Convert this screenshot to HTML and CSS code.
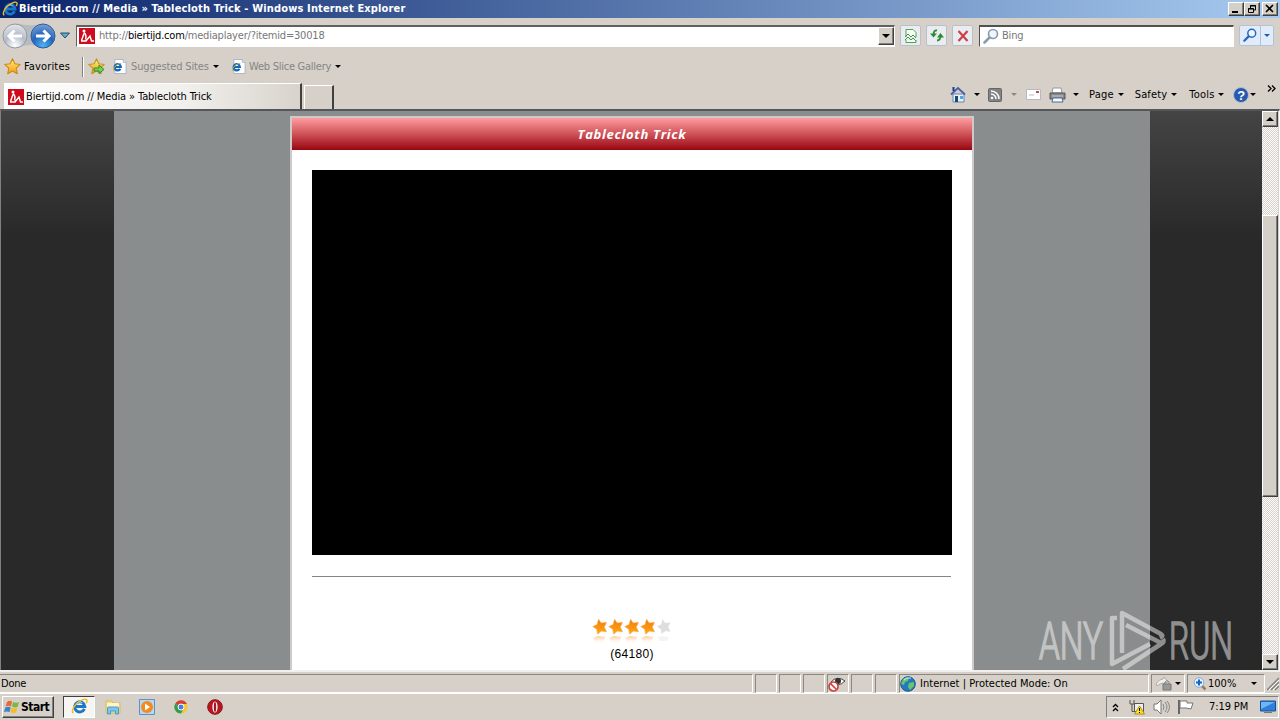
FILE: index.html
```html
<!DOCTYPE html>
<html lang="en">
<head>
    <meta charset="UTF-8" />
    <title>Biertijd.com // Media » Tablecloth Trick</title>
    <link rel="stylesheet" href="styles.css">
</head>
<body>
    <svg class="defs" width="0" height="0">
        <defs>
            <linearGradient id="gold" x1="0" y1="0" x2="0" y2="1"><stop offset="0" stop-color="#fff27a" /><stop offset="1" stop-color="#f59a13" /></linearGradient>
            <linearGradient id="orange" x1="0" y1="0" x2="0" y2="1"><stop offset="0" stop-color="#f47a14" /><stop offset="1" stop-color="#ffa90c" /></linearGradient>
            <radialGradient id="blue" cx=".5" cy=".9" r=".9"><stop offset="0" stop-color="#4fb4f4" /><stop offset=".5" stop-color="#2465bd" /><stop offset="1" stop-color="#7aa2d4" /></radialGradient>
            <radialGradient id="silver" cx=".5" cy=".9" r=".9"><stop offset="0" stop-color="#ffffff" /><stop offset=".5" stop-color="#b4bcc8" /><stop offset="1" stop-color="#e6e8ec" /></radialGradient>
            <linearGradient id="fade" x1="0" y1="0" x2="0" y2="1"><stop offset="0" stop-color="#ffbd70" stop-opacity=".8" /><stop offset="1" stop-color="#fff" stop-opacity="0" /></linearGradient>
            <symbol id="ie" viewBox="0 0 16 16">
                <path d="M12.6 10.3A4.8 4.8 0 1 1 13 8H4" fill="none" stroke="#1b78c8" stroke-width="2.8" />
                <path d="M4.6 6.2a3.9 3.9 0 0 1 6-1.5" fill="none" stroke="#8bd3fa" stroke-width="1" />
                <path d="M2.3 14.3C-1 12 5 3.300 12 1.300c4-.9 3.400 2 2.200 3.700" fill="none" stroke="#edbc2e" stroke-width="1.400" />
            </symbol>
            <symbol id="iepage" viewBox="0 0 16 16">
                <path d="M3 .5h9l3 3v12H3z" fill="#fff" stroke="#a4b4c8" />
                <path d="M12 .5v3h3" fill="#dde6f0" stroke="#a4b4c8" />
                <path d="M9 10.500A3.400 3.400 0 1 1 9.500 8.500H3" fill="none" stroke="#1467b8" stroke-width="2.200" />
                <path d="M2 13C0 10 5 5 10 4.500" fill="none" stroke="#d9b33b" />
            </symbol>
            <symbol id="fav" viewBox="0 0 16 16">
                <path d="M0 0h16v16H0z" fill="#cf0a1c" />
                <circle cx="5" cy="3" r="1.500" fill="#fff" />
                <path d="M5 4.500Q8 7 6.500 11.500M5 5.500L2.500 12.500M2 13h5l4-5 1.500 5H15" fill="none" stroke="#fff" stroke-width="1.500" />
            </symbol>
            <symbol id="star" viewBox="0 0 16 16">
                <path d="M8 .8l2.200 4.700 5.100.6-3.800 3.500 1 5.200L8 12.300l-4.500 2.500 1-5.200L.7 6.100l5.100-.6z" stroke-linejoin="round" />
            </symbol>
            <symbol id="rate" viewBox="0 0 16 16">
                <path d="M6.500 .8l2.700 3.700 5.300-.6-2.300 4.600 2.300 4.800-5.100-.7-3.800 3-.8-4.900L.8 8.100l4.400-2z" stroke-linejoin="round" />
            </symbol>
            <symbol id="lens" viewBox="0 0 16 16">
                <path d="M7 9L1.500 14.500" stroke-width="2.500" stroke-linecap="round" />
                <circle cx="10" cy="6" r="4.500" fill="#eef6ff" stroke-width="1.700" />
            </symbol>
        </defs>
    </svg>

    <div class="titlebar">
        <svg class="title-icon" width="16" height="16"><use href="#ie" /></svg>
        <span class="title-text">Biertijd.com // Media » Tablecloth Trick - Windows Internet Explorer</span>
        <div class="win-buttons">
            <span class="win-btn"><svg width="12" height="10"><path d="M2 8h6" stroke="#000" stroke-width="2" /></svg></span>
            <span class="win-btn"><svg width="12" height="10"><path d="M4.500 4V1.500h5V6H8M4 2h6" fill="none" stroke="#000" /><path d="M2.500 4.500h5v4h-5zM2 5h6" fill="none" stroke="#000" /></svg></span>
            <span class="win-btn close"><svg width="12" height="10"><path d="M2 1l7 7M9 1L2 8" stroke="#000" stroke-width="1.600" /></svg></span>
        </div>
    </div>

    <div class="navbar">
        <svg class="arrows" width="56" height="28">
            <path d="M15 1.500Q28 5 43 1.500V26Q28 20 15 26z" fill="#b8bbc0" />
            <circle cx="13" cy="14" r="12" fill="url(#silver)" stroke="#8f98a5" />
            <path d="M7 14h13M12.500 8.500L7 14l5.500 5.500" fill="none" stroke="#fff" stroke-width="3" />
            <circle cx="41" cy="14" r="12" fill="url(#blue)" stroke="#315c98" />
            <path d="M34 14h12M41.500 8.500L47 14l-5.500 5.500" fill="none" stroke="#fff" stroke-width="3" />
        </svg>
        <svg class="recent" width="10" height="7"><path d="M.5 1h9L5 6z" fill="#62aac8" stroke="#1c5274" /></svg>
        <div class="address">
            <svg width="16" height="16"><use href="#fav" /></svg>
            <span class="url">http://<b>biertijd.com</b>/mediaplayer/?itemid=30018</span>
            <span class="drop"><i class="tri wide"></i></span>
        </div>
        <div class="tool"><svg width="16" height="16"><path d="M3 9V1.500h7l3 3V9M3 12v2.500h10V12" fill="#f4fff2" stroke="#55a058" /><path d="M2 9l3-3 3 3 2-2 3 3M2 12l3-3 3 3 2-2 3 3" fill="none" stroke="#45964c" /></svg></div>
        <div class="tool"><svg width="16" height="16"><path d="M8 2.500Q4.500 2 4.500 7M8 12.500q3.500 0 3.500-5" fill="none" stroke="#2a8b31" stroke-width="1.800" /><path d="M1 5.500h7L4.500 9.500zM8 9.500h7L11.500 5z" fill="#2a8b31" /></svg></div>
        <div class="tool"><svg width="16" height="16"><path d="M3.500 3l9 10M12.500 3l-9 10" stroke="#cd4146" stroke-width="2.200" /></svg></div>
        <div class="search">
            <svg width="16" height="16" stroke="#8b9cb1"><use href="#lens" /></svg>
            <span>Bing</span>
        </div>
        <div class="go">
            <span class="go-main"><svg width="14" height="14" stroke="#2563c4"><use href="#lens" /></svg></span>
            <span class="go-drop"><i class="tri blue"></i></span>
        </div>
    </div>

    <div class="favorites">
        <svg class="fav-star" width="17" height="17" fill="url(#gold)" stroke="#cf8717"><use href="#star" /></svg>
        <span class="fav-label">Favorites</span>
        <i class="sep"></i>
        <svg width="17" height="17"><use href="#star" fill="url(#gold)" stroke="#c69222" /><path d="M6 10h5V7l5 4.500-5 4V13H6z" fill="#70d34f" stroke="#308d2c" /></svg>
        <svg class="page-icon" width="15" height="15"><use href="#iepage" /></svg>
        <span class="gray suggested">Suggested Sites</span><i class="tri"></i>
        <svg class="page-icon second" width="15" height="15"><use href="#iepage" /></svg>
        <span class="gray slice">Web Slice Gallery</span><i class="tri"></i>
    </div>

    <div class="tabs">
        <div class="tab">
            <svg width="16" height="16"><use href="#fav" /></svg>
            <span>Biertijd.com // Media » Tablecloth Trick</span>
        </div>
        <div class="newtab"></div>
        <div class="commands">
            <svg width="17" height="17"><path d="M3 8h11v8H3z" fill="#e9f0fb" stroke="#6e83a8" /><path d="M1 8.500L8 2l7 6.500" fill="none" stroke="#4263ac" stroke-width="1.800" /><path d="M3.500 1v4" stroke="#26377c" stroke-width="2" /><path d="M5 10h3v6H5z" fill="#184977" /><path d="M10 10h3v3h-3z" fill="#4caae2" /></svg>
            <i class="tri c1"></i>
            <svg class="c2" width="14" height="14"><rect x=".5" y=".5" width="13" height="13" rx="1" fill="#828282" stroke="#666" /><circle cx="4" cy="10" r="1.300" fill="#fff" /><path d="M3 6a5 5 0 0 1 5 5M3 3a8 8 0 0 1 8 8" fill="none" stroke="#fff" stroke-width="1.500" /></svg>
            <i class="tri c3"></i>
            <svg class="c4" width="15" height="11"><path d="M.5.5h14v10H.5z" fill="#fff" stroke="#b8b8c4" /><path d="M10 2h3v2h-3z" fill="#c74755" /><path d="M3 6h5" stroke="#bbb" /></svg>
            <svg class="c5" width="17" height="16"><path d="M4 1h8l1 5H3z" fill="#fff" stroke="#999" /><path d="M1 6h15v6H1z" fill="#858990" stroke="#555" /><path d="M3 9h11" stroke="#ccc" /><path d="M4 11h9l1 4H3z" fill="#f6faff" stroke="#4c6e92" /></svg>
            <i class="tri c6"></i>
            <span class="c7">Page</span><i class="tri"></i>
            <span class="c8">Safety</span><i class="tri"></i>
            <span class="c9">Tools</span><i class="tri"></i>
            <svg class="c10" width="16" height="16"><circle cx="8" cy="8" r="7.500" fill="#2859af" stroke="#aebfd9" /><text x="8" y="13" text-anchor="middle" class="help">?</text></svg>
            <i class="tri"></i>
        </div>
        <svg class="chevron" width="9" height="7"><path d="M1 .5l3 3-3 3M5 .5l3 3-3 3" fill="none" stroke="#000" stroke-width="1.300" /></svg>
    </div>

    <div class="viewport">
        <div class="page">
            <div class="content">
                <div class="card">
                    <h1>Tablecloth Trick</h1>
                    <div class="video"></div>
                    <hr>
                    <div class="rating">
                        <svg width="80" height="28">
                            <g fill="url(#orange)" stroke="#f6a640" stroke-width=".6">
                                <use href="#rate" x="0" width="16" height="17" />
                                <use href="#rate" x="16" width="16" height="17" />
                                <use href="#rate" x="32" width="16" height="17" />
                                <use href="#rate" x="48" width="16" height="17" />
                            </g>
                            <use href="#rate" x="64" width="16" height="17" fill="#dedede" />
                            <path d="M1 20l5-2 7 1-1 7H3zM17 20l5-2 7 1-1 7h-9zM33 20l5-2 7 1-1 7h-9zM49 20l5-2 7 1-1 7h-9z" fill="url(#fade)" />
                            <path d="M66 19l4-1 7 1-2 4h-7z" fill="#f4f4f4" />
                        </svg>
                        <span>(64180)</span>
                    </div>
                </div>
            </div>
        </div>
        <div class="scrollbar">
            <span class="scroll-btn"><i class="tri up"></i></span>
            <span class="thumb"></span>
            <span class="scroll-btn end"><i class="tri wide"></i></span>
        </div>
        <svg class="watermark" width="220" height="64">
            <text x="3" y="50" textLength="64" lengthAdjust="spacingAndGlyphs">ANY</text>
            <text x="133" y="50" textLength="64" lengthAdjust="spacingAndGlyphs">RUN</text>
            <path d="M81 9h-5v46l38-20M86 44V4l39 21q3 2-1 4M90 16l35 18M127 30q2 3-2 5L87 60" />
        </svg>
    </div>

    <div class="statusbar">
        <div class="pane done">Done</div>
        <div class="pane small"></div>
        <div class="pane small"></div>
        <div class="pane small"></div>
        <div class="pane small"><svg width="18" height="16"><path d="M3 6Q9-1 17 5Q10 12 3 6z" fill="#fff" stroke="#444" /><circle cx="10" cy="5" r="3" fill="#333" /><circle cx="5.500" cy="10.500" r="4.500" fill="#fff" stroke="#d0403b" stroke-width="1.700" /><path d="M2.500 7.500l6 6" stroke="#d0403b" stroke-width="1.700" /></svg></div>
        <div class="pane small"></div>
        <div class="pane small"></div>
        <div class="pane zone">
            <svg width="16" height="16"><circle cx="8" cy="8" r="7.300" fill="#2678c4" stroke="#1a568d" /><path d="M3 3q4-3 6-1l-1 3-3 1-1 3-3-1zM9 7l5-1v4l-4 4-2-3z" fill="#67c86a" /><path d="M4 4q3-3 7-2" stroke="#c9ecff" fill="none" /></svg>
            <span>Internet | Protected Mode: On</span>
        </div>
        <div class="pane lock"><svg width="18" height="15"><path d="M1 8q3-5 7-5l1-2 4 5-4 1q-4 0-7 3z" fill="#eee" stroke="#aaa" /><path d="M8 8h8v6H8z" fill="#999" stroke="#777" /><path d="M10 8V6q2-3 4 0v2" fill="none" stroke="#888" /></svg><i class="tri"></i></div>
        <div class="pane percent"><svg width="14" height="14"><path d="M8 8l4.500 4.500" stroke="#9a7d64" stroke-width="2.500" /><circle cx="6" cy="5.500" r="4.800" fill="#e5f3ff" stroke="#87a9cf" /><path d="M6 2.500v6M3 5.500h6" stroke="#1765c0" stroke-width="2" /></svg><span>100%</span><i class="tri"></i></div>
        <svg class="grip" width="12" height="14"><path d="M0 13L12 1M4 13l8-8M8 13l4-4" stroke="#808080" stroke-width="1.500" /><path d="M2 13L12 3M6 13l6-6" stroke="#fff" /></svg>
    </div>

    <div class="taskbar">
        <div class="start">
            <svg width="17" height="16"><path d="M3 3q3-2 5-.5L7 7.500Q4 6 1.500 7.500z" fill="#ea6834" /><path d="M9 3q3 1.500 6 0l-1.500 5Q11 9 8 7.500z" fill="#79b943" /><path d="M1.300 8.500Q4 7 6.700 8.500L5.500 13Q3 12 0 13z" fill="#3b83cc" /><path d="M7.700 8.700q3 1.300 5.500.3L12 13.500q-3 1-5.500-.5z" fill="#f7ba28" /></svg>
            <span>Start</span>
        </div>
        <div class="task-active"><svg width="17" height="17"><use href="#ie" /></svg></div>
        <svg class="t1" width="16" height="16"><path d="M1 2h6l1 2h7v10H1z" fill="#f5df8b" stroke="#d9bc5d" /><path d="M2 4h12v4H2z" fill="#fff5c7" /><path d="M2.500 15V9q0-1 1-1h9q1 0 1 1v6h-3v-3h-5v3z" fill="#7cc6ec" stroke="#4b9bc9" /></svg>
        <svg class="t2" width="16" height="16"><path d="M.5.5h15v15H.5z" fill="#b6d8f5" stroke="#5a93c8" /><circle cx="8" cy="8" r="6" fill="#f28a1d" /><path d="M6 4.500l5 3.500-5 3.500z" fill="#fff" /></svg>
        <svg class="t3" width="14" height="14"><circle cx="7" cy="7" r="6.500" fill="#f6c929" /><path d="M7 7L1.200 3.700A6.600 6.600 0 0 1 13 4H7z" fill="#d93e34" /><path d="M7 7L1.200 3.700A6.600 6.600 0 0 0 7 13.600l2.500-5z" fill="#349b51" /><circle cx="7" cy="7" r="3" fill="#3e80e4" stroke="#fff" /></svg>
        <svg class="t4" width="16" height="16"><circle cx="8" cy="8" r="7.300" fill="#b91620" stroke="#8d0f17" /><ellipse cx="8" cy="8" rx="2.600" ry="5.500" fill="#fff" /><ellipse cx="8" cy="8" rx="1.200" ry="5" fill="#a51820" /></svg>
        <div class="tray">
            <svg class="up2" width="7" height="9"><path d="M1 4l2.500-2.500L6 4M1 8l2.500-2.500L6 8" fill="none" stroke="#000" stroke-width="1.300" /></svg>
            <svg class="net" width="17" height="16"><path d="M5.500 4.500h9v8h-9z" fill="#eee" stroke="#555" /><path d="M1 1v4h4V1M3 5v7.500h7" fill="none" stroke="#555" /><path d="M10.500 7l5 8h-10z" fill="#ffe02e" stroke="#ad920d" /><path d="M10.500 9v3M10.500 13v1" stroke="#000" /></svg>
            <svg class="vol" width="18" height="16"><path d="M1 5h3l4-4v14l-4-4H1z" fill="#fff" stroke="#777" /><path d="M10 5q2 3 0 6M12 3q4 5 0 10M14 2q5 6 0 12" fill="none" stroke="#888" /></svg>
            <svg class="flag" width="17" height="16"><path d="M2 1v14" stroke="#666" stroke-width="2" /><path d="M3 2h7v2h6l-2 6-5-1H3z" fill="#fff" stroke="#777" /></svg>
            <span class="clock">7:19 PM</span>
            <svg class="desk" width="16" height="14"><path d="M.5 1h15v10H.5z" fill="#2e80dc" stroke="#174f95" /><path d="M1 2h14L1 9z" fill="#6eb5f3" /><path d="M4 12.500h8" stroke="#777" /></svg>
        </div>
    </div>
</body>
</html>
```
FILE: styles.css
```css
* {
    box-sizing: border-box;
}

body {
    margin: 0;
    width: 1280px;
    height: 720px;
    overflow: hidden;
    background: #d6d0c8;
    color: #000;
    font: 11px/14px "DejaVu Sans Condensed", "DejaVu Sans", sans-serif;
    font-stretch: condensed;
    letter-spacing: -0.2px;
    white-space: nowrap;
}

svg {
    flex: none;
    display: block;
}

.defs {
    position: absolute;
}

.titlebar, .navbar, .favorites, .tabs, .commands, .address, .search, .statusbar, .pane, .taskbar, .tray, .start {
    display: flex;
    align-items: center;
}

.tri {
    flex: none;
    border: 3px solid transparent;
    border-top-color: #000;
    border-bottom: 0;
}

.tri.wide {
    border-width: 4px 4px 0;
}

.tri.up {
    border: 4px solid transparent;
    border-bottom-color: #000;
    border-top: 0;
}

.tri.blue {
    border-top-color: #245eaa;
}

/* title bar */
.titlebar {
    height: 18px;
    padding-left: 2px;
    background: linear-gradient(90deg, #0a246a, #a6caf0);
    color: #fff;
}

.title-text {
    margin-left: 1px;
    font-weight: bold;
    letter-spacing: 0.15px;
}

.win-buttons {
    display: flex;
    margin-left: auto;
    padding-right: 2px;
}

.win-btn, .drop, .scroll-btn, .thumb {
    background: #d4d0c8;
    border: 1px solid;
    border-color: #fff #404040 #404040 #fff;
    box-shadow: inset -1px -1px #808080;
}

.win-btn {
    width: 16px;
    height: 14px;
    padding: 1px;
}

.win-btn.close {
    margin-left: 2px;
}

/* address row */
.navbar {
    height: 35px;
    padding-left: 2px;
}

.recent {
    margin-left: 2px;
}

.address {
    width: 819px;
    height: 22px;
    margin-left: 6px;
    padding-left: 2px;
    background: #fff;
    border: 1px solid;
    border-color: #606060 #fff #fff #606060;
    border-top-width: 2px;
    color: #777;
}

.url {
    margin-left: 4px;
}

.url b {
    color: #000;
    font-weight: normal;
}

.drop {
    display: flex;
    align-items: center;
    justify-content: center;
    width: 16px;
    height: 18px;
    margin-left: auto;
}

.tool {
    width: 21px;
    height: 21px;
    margin-left: 5px;
    padding: 2px;
    background: #e9edf2;
    border: 1px solid #b8c0cc;
    border-radius: 2px;
}

.search {
    width: 255px;
    height: 22px;
    margin-left: 6px;
    padding-left: 3px;
    background: #fff;
    border: 1px solid;
    border-top-width: 2px;
    border-color: #505050 #fff #fff #505050;
    color: #777;
}

.search span {
    margin-left: 3px;
}

.go {
    display: flex;
    width: 35px;
    height: 21px;
    margin-left: 5px;
    background: #e1ecfa;
    border: 1px solid #b5c2d5;
    border-radius: 2px;
}

.go-main {
    width: 21px;
    padding: 2px 3px;
    border-right: 1px solid #b5c2d5;
}

.go-drop {
    display: flex;
    align-items: center;
    padding: 0 3px;
}

/* favorites row */
.favorites {
    height: 27px;
    padding-left: 4px;
}

.fav-label {
    width: 48px;
    margin-left: 3px;
    letter-spacing: 0.15px;
}

.sep {
    width: 2px;
    height: 20px;
    margin: 0 4px 0 10px;
    border-left: 1px solid #808080;
    border-right: 1px solid #fff;
}

.page-icon {
    margin-left: 7px;
}

.page-icon.second {
    margin-left: 12px;
}

.gray {
    margin-left: 4px;
    color: #858585;
}

.suggested {
    width: 82px;
    letter-spacing: -0.15px;
}

.slice {
    width: 86px;
    margin-left: 3px;
    letter-spacing: -0.25px;
}

/* tabs and command bar */
.tabs {
    height: 29px;
    padding-left: 4px;
}

.tab {
    display: flex;
    align-items: center;
    width: 298px;
    height: 26px;
    margin-top: 3px;
    padding-left: 3px;
    background: linear-gradient(90deg, #fff, #f2f0ed 60%, #d8d3cc);
    border-top: 1px solid #fff;
    border-left: 1px solid #fff;
    border-right: 2px solid #404040;
}

.tab span {
    margin-left: 2px;
    letter-spacing: -0.11px;
}

.newtab {
    width: 30px;
    height: 24px;
    margin: 4px 0 0 2px;
    border-top: 1px solid #fff;
    border-left: 1px solid #fff;
    border-right: 2px solid #404040;
}

.commands {
    width: 306px;
    margin-left: 616px;
}

.c1 {
    margin-left: 7px;
}

.c2 {
    margin-left: 8px;
}

.c3 {
    margin-left: 9px;
    opacity: 0.35;
}

.c4 {
    margin-left: 9px;
}

.c5 {
    margin-left: 8px;
}

.c6 {
    margin-left: 7px;
}

.c7 {
    width: 26px;
    margin: 0 3px 0 10px;
    letter-spacing: 0.2px;
}

.c8 {
    width: 34px;
    margin: 0 3px 0 11px;
    letter-spacing: 0.15px;
}

.c9 {
    width: 27px;
    margin: 0 2px 0 12px;
    letter-spacing: 0.2px;
}

.c10 {
    margin: 0 1px 0 9px;
}

.help {
    fill: #fff;
    font: bold 13px "Liberation Sans", sans-serif;
}

.chevron {
    margin: -13px 0 0 11px;
}

/* browser viewport */
.viewport {
    position: relative;
    display: flex;
    height: 561px;
    border: 1px solid #808080;
    border-top: 2px solid #55565a;
    border-bottom: 0;
    border-right-color: #fff;
}

.page {
    flex: 1;
    padding: 0 112px 0 113px;
    background: linear-gradient(#444 0, #292929 125px, #292929 100%);
}

.content {
    height: 559px;
    padding: 5px 176px 0;
    background: #8a8d8d;
}

.card {
    height: 554px;
    background: #fff;
    border: 2px solid #cfcaca;
    border-bottom: 0;
}

.card h1 {
    height: 32px;
    margin: 0;
    background: linear-gradient(#ff9ca0, #cf5259 50%, #980510);
    color: #fff;
    font: italic bold 13px/32px "Open Sans", sans-serif;
    letter-spacing: 0.7px;
    text-align: center;
}

.video {
    width: 640px;
    height: 385px;
    margin: 20px 20px 0;
    background: #000;
}

hr {
    width: 639px;
    height: 1px;
    margin: 21px 20px 0;
    border: 0;
    background: #858585;
}

.rating {
    display: flex;
    flex-direction: column;
    align-items: center;
    margin-top: 41px;
}

.rating svg {
    margin-right: 1px;
}

.rating span {
    margin-top: 1px;
    font: 12px/14px "Liberation Sans", sans-serif;
    letter-spacing: 0.3px;
}

.scrollbar {
    width: 16px;
    margin-right: 1px;
    background: repeating-conic-gradient(#fff 0 25%, #d4d0c8 0 50%) 0 0 / 2px 2px;
}

.scroll-btn, .thumb {
    display: flex;
    align-items: center;
    justify-content: center;
    height: 16px;
}

.scroll-btn.end {
    margin-top: 157px;
}

.thumb {
    height: 282px;
    margin-top: 88px;
}

.watermark {
    position: absolute;
    left: 1035px;
    top: 498px;
    overflow: visible;
    opacity: 0.48;
}

.watermark text {
    fill: #fff;
    stroke: #fff;
    stroke-width: 1.6px;
    font: 300 51px Roboto, "Open Sans", sans-serif;
    letter-spacing: 0;
}

.watermark path {
    fill: none;
    stroke: #fff;
    stroke-width: 4.5;
    stroke-linejoin: round;
}

/* status bar */
.statusbar {
    height: 24px;
    padding-top: 2px;
    border-top: 2px solid #f2f0ec;
    border-bottom: 1px solid #fff;
}

.pane {
    height: 19px;
    margin-right: 2px;
    border: 1px solid;
    border-color: #8a8680 #fff #fff #8a8680;
}

.done {
    width: 753px;
    border-left: 0;
    padding-left: 1px;
}

.small {
    width: 22px;
}

.zone {
    width: 250px;
}

.zone span {
    margin-left: 4px;
    letter-spacing: 0.03px;
}

.lock {
    width: 34px;
    padding-left: 3px;
}

.lock .tri {
    margin-left: 2px;
}

.percent {
    width: 78px;
    padding-left: 5px;
}

.percent span {
    width: 43px;
    margin-left: 1px;
    letter-spacing: 0;
}

/* taskbar */
.taskbar {
    height: 26px;
    padding-left: 2px;
}

.start {
    width: 52px;
    height: 22px;
    padding-left: 1px;
    border: 1px solid;
    border-color: #fff #404040 #404040 #fff;
    box-shadow: inset -1px -1px #808080;
    font-weight: bold;
    font-size: 12px;
    letter-spacing: -0.5px;
}

.task-active {
    width: 32px;
    height: 22px;
    margin-left: 9px;
    padding: 1px 7px;
    background: #f7f5f2;
    border: 1px solid;
    border-color: #404040 #fff #fff #404040;
}

.t1 {
    margin-left: 10px;
}

.t2 {
    margin-left: 18px;
}

.t3 {
    margin-left: 19px;
}

.t4 {
    margin-left: 19px;
}

.tray {
    width: 173px;
    height: 22px;
    margin: 0 1px 0 auto;
    padding-left: 5px;
    border: 1px solid;
    border-color: #808080 #fff #fff #808080;
}

.net {
    margin-left: 10px;
}

.vol {
    margin-left: 7px;
}

.flag {
    margin-left: 6px;
}

.clock {
    width: 40px;
    margin-left: 15px;
    letter-spacing: -0.1px;
}

.desk {
    margin-left: 11px;
}
```
